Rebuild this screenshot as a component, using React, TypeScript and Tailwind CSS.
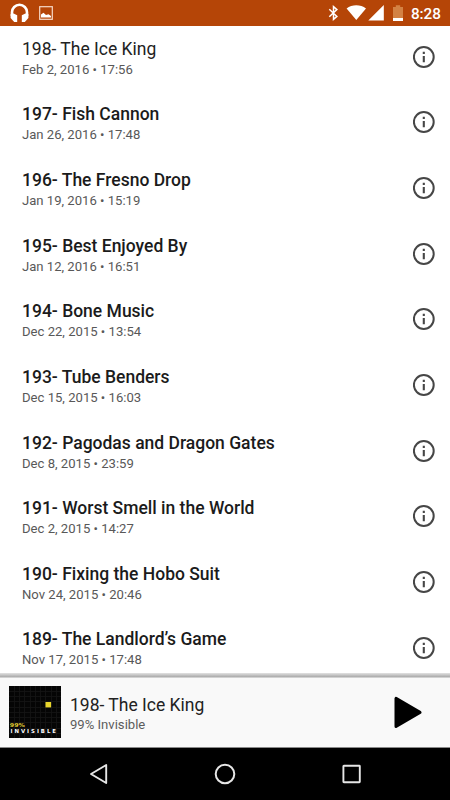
import React from "react";

interface Episode {
  title: string;
  date: string;
  length: string;
  played?: boolean;
}

const episodes: Episode[] = [
  { title: "198- The Ice King", date: "Feb 2, 2016", length: "17:56", played: true },
  { title: "197- Fish Cannon", date: "Jan 26, 2016", length: "17:48" },
  { title: "196- The Fresno Drop", date: "Jan 19, 2016", length: "15:19" },
  { title: "195- Best Enjoyed By", date: "Jan 12, 2016", length: "16:51" },
  { title: "194- Bone Music", date: "Dec 22, 2015", length: "13:54" },
  { title: "193- Tube Benders", date: "Dec 15, 2015", length: "16:03" },
  { title: "192- Pagodas and Dragon Gates", date: "Dec 8, 2015", length: "23:59" },
  { title: "191- Worst Smell in the World", date: "Dec 2, 2015", length: "14:27" },
  { title: "190- Fixing the Hobo Suit", date: "Nov 24, 2015", length: "20:46" },
  { title: "189- The Landlord’s Game", date: "Nov 17, 2015", length: "17:48" },
];

const StatusBar: React.FC = () => (
  <header className="flex h-[26px] shrink-0 items-center justify-between bg-[#b54507] pl-[10px] pr-[9px] text-white">
    <div className="flex items-center">
      <svg width="19" height="20" viewBox="0 0 19 20" fill="none">
        <path d="M2 13V9.3a7.5 7.5 0 0 1 15 0V13" stroke="#fff" strokeWidth="2.6" />
        <path d="M.6 11 3.6 10.6 7.2 12.3V19H4.2L.6 15Z" fill="#fff" />
        <path d="M18.4 11 15.4 10.6 11.8 12.3V19H14.8L18.4 15Z" fill="#fff" />
      </svg>
      <svg className="ml-[10px]" width="14" height="14" viewBox="0 0 14 14">
        <rect x=".7" y=".7" width="12.6" height="12.6" stroke="#f7d9c8" strokeWidth="1.2" fill="none" />
        <path d="M2 11.6V8.6L4.5 6.8 7 9 9.5 8.3 12 10V11.6Z" fill="#fff" />
      </svg>
    </div>
    <div className="flex items-center">
      <svg width="10" height="16" viewBox="0 0 10 16" fill="none" stroke="#fff" strokeWidth="1.5">
        <path d="M1.3 4.2 8.9 11.4 5.5 14.4V1.6L8.9 4.6 1.3 11.8" />
      </svg>
      <svg className="ml-2" width="20" height="15" viewBox="0 0 20 15">
        <path d="M.6 3.6C6-.8 14.5-.8 20 3.6L10.3 15Z" fill="#fff" />
      </svg>
      <svg className="ml-[1.5px]" width="16" height="16" viewBox="0 0 16 16">
        <path d="M.3 15.5H15.8V0Z" fill="#fff" />
      </svg>
      <svg className="ml-[9px]" width="10" height="16" viewBox="0 0 10 16">
        <path d="M0 2H2.8V.2H7.2V2H10V13H0Z" fill="#d38244" />
        <path d="M0 13H10V16H0Z" fill="#fff" />
      </svg>
      <span className="ml-2 pt-[3px] text-[15.3px] leading-none font-medium">8:28</span>
    </div>
  </header>
);

const InfoIcon: React.FC = () => (
  <svg width="22" height="22" viewBox="0 0 22 22" fill="none">
    <circle cx="10.8" cy="11" r="9.9" stroke="#464646" strokeWidth="2" />
    <path d="M10.8 9.9V16.3M10.8 5.7V7.9" stroke="#464646" strokeWidth="2.1" />
  </svg>
);

const EpisodeRow: React.FC<{ episode: Episode }> = ({ episode }) => (
  <li className="flex h-[65.65px] shrink-0 items-center justify-between pl-[22px] pr-[15px]">
    <div className="pt-[3.8px]">
      <div
        className={
          episode.played
            ? "text-[17.5px] leading-[21px] text-[#222]"
            : "text-[17.5px] leading-[21px] font-medium text-[#1b1b1b]"
        }
      >
        {episode.title}
      </div>
      <div className="mt-px text-[13.1px] leading-[18px] text-[#585858]">
        {episode.date} • {episode.length}
      </div>
    </div>
    <InfoIcon />
  </li>
);

const Artwork: React.FC = () => (
  <svg width="52" height="52" viewBox="0 0 52 52">
    <rect width="52" height="52" fill="#050505" />
    {[5, 10, 15, 21, 26, 31, 36, 42, 47].map((p) => (
      <path key={p} d={`M${p + 0.5} 0V52M0 ${p + 0.5}H52`} stroke="#151515" strokeWidth=".8" />
    ))}
    <rect x="36.5" y="16" width="5.6" height="5.4" fill="#e8d52c" />
    <text x=".8" y="41.4" fontSize="5.4" fontWeight="700" fontFamily="DejaVu Sans, sans-serif" textLength="15" lengthAdjust="spacingAndGlyphs" fill="#e0cb34">
      99%
    </text>
    <text x="1.5" y="46.8" fontSize="5.4" fontWeight="700" fontFamily="DejaVu Sans, sans-serif" textLength="45.5" fill="#fff">
      INVISIBLE
    </text>
  </svg>
);

const Player: React.FC = () => (
  <section className="flex h-[75px] shrink-0 items-center border-b border-[#8a8a8a] bg-[#f9f9f9] bg-[linear-gradient(to_bottom,#e2e2e2,#a9a9a9_4px,#f9f9f9_5px)] pt-[4px] pb-px pl-[9px] pr-[28px]">
    <Artwork />
    <div className="ml-[9px] flex-1 pt-[6px]">
      <div className="text-[17.5px] leading-[21px] text-[#222]">198- The Ice King</div>
      <div className="text-[13.1px] leading-[18px] text-[#5c5c5c]">99% Invisible</div>
    </div>
    <svg width="28" height="32" viewBox="0 0 28 32">
      <path d="M2 2.4V30.4L26 16.4Z" fill="#000" stroke="#000" strokeWidth="3" strokeLinejoin="round" />
    </svg>
  </section>
);

const NavBar: React.FC = () => (
  <nav className="flex h-[52px] shrink-0 items-center justify-between bg-black px-[88px]">
    <svg width="20" height="22" viewBox="0 0 20 22" fill="none">
      <path d="M18.2 2V20L3 11Z" stroke="#e6e6e6" strokeWidth="1.9" strokeLinejoin="round" />
    </svg>
    <svg width="22" height="22" viewBox="0 0 22 22" fill="none">
      <circle cx="11" cy="11" r="9.3" stroke="#e6e6e6" strokeWidth="2" />
    </svg>
    <svg width="20" height="20" viewBox="0 0 20 20" fill="none">
      <rect x="1.4" y="1.8" width="16.4" height="16.4" rx=".5" stroke="#e6e6e6" strokeWidth="1.9" />
    </svg>
  </nav>
);

const App: React.FC = () => {
  return (
    <div className="flex h-screen w-full flex-col overflow-hidden bg-white font-['Roboto',sans-serif]">
      <StatusBar />
      <main className="min-h-0 flex-1 overflow-hidden">
        <ul className="-mt-[2px] flex flex-col">
          {episodes.map((episode) => (
            <EpisodeRow key={episode.title} episode={episode} />
          ))}
        </ul>
      </main>
      <Player />
      <NavBar />
    </div>
  );
};

export default App;
